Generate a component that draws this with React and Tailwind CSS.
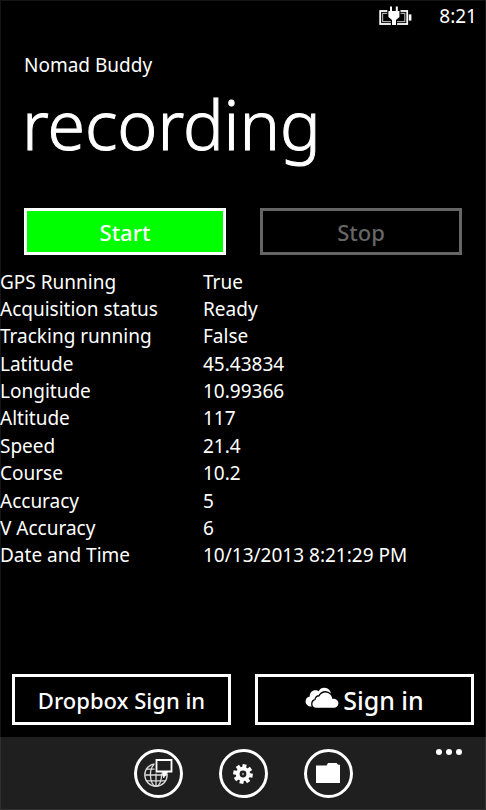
import React from "react";

const READINGS = [
  ["GPS Running", "True"],
  ["Acquisition status", "Ready"],
  ["Tracking running", "False"],
  ["Latitude", "45.43834"],
  ["Longitude", "10.99366"],
  ["Altitude", "117"],
  ["Speed", "21.4"],
  ["Course", "10.2"],
  ["Accuracy", "5"],
  ["V Accuracy", "6"],
  ["Date and Time", "10/13/2013 8:21:29 PM"],
];

export default function App() {
  return (
    <div className="relative flex min-h-screen flex-col bg-black font-['Noto_Sans','Open_Sans',sans-serif] text-white">
      <StatusBar />

      <header className="px-6 pt-[19px]">
        <p className="text-[19px] leading-7">Nomad Buddy</p>
        <h1 className="-ml-0.5 text-[68px] leading-[90px] font-light [-webkit-text-stroke:1px_white]">recording</h1>
      </header>

      <main className="flex flex-1 flex-col">
        <div className="grid grid-cols-2 gap-[34px] px-6 pt-[39px]">
          <button type="button" className="h-[47px] border-[3px] border-white bg-[#00ff00] text-[22px] leading-7 font-medium">
            Start
          </button>
          <button type="button" disabled className="h-[47px] border-[3px] border-[#666] text-[22px] leading-7 font-medium text-[#666]">
            Stop
          </button>
        </div>

        <table className="mt-[13px] h-[301px] w-full table-fixed text-left text-[19px] leading-[26px]">
          <tbody>
            {READINGS.map(([label, value]) => (
              <tr key={label}>
                <th scope="row" className="w-[203px] p-0 font-normal">{label}</th>
                <td className="p-0">{value}</td>
              </tr>
            ))}
          </tbody>
        </table>

        <div className="mt-auto grid grid-cols-2 gap-6 px-3 pb-3">
          <button type="button" className="h-[51px] border-[3px] border-white text-[22px] leading-7 font-medium">
            Dropbox Sign in
          </button>
          <button type="button" className="flex h-[51px] items-center justify-center gap-1 border-[3px] border-white text-[25px] leading-8 font-medium">
            <CloudIcon />
            Sign in
          </button>
        </div>
      </main>

      <AppBar />

      {/* faint screen edge */}
      <div className="pointer-events-none absolute inset-0 border border-white/8" aria-hidden="true" />
    </div>
  );
}

function StatusBar() {
  return (
    <div className="flex h-8 items-center justify-end gap-[26px] pr-[9px]">
      <BatteryIcon />
      <time className="text-[19px] leading-7">8:21</time>
    </div>
  );
}

function AppBar() {
  return (
    <footer className="grid h-[73px] grid-cols-[1fr_auto_1fr] items-start bg-[#1f1f1f]">
      <nav className="col-start-2 flex gap-9 pt-3" aria-label="App bar">
        <RoundButton label="Map">
          <GlobeIcon />
        </RoundButton>
        <RoundButton label="Settings">
          <GearIcon />
        </RoundButton>
        <RoundButton label="Files">
          <FolderIcon />
        </RoundButton>
      </nav>
      <button type="button" aria-label="More" className="mt-3 mr-6 justify-self-end">
        <svg width="26" height="6" viewBox="0 0 26 6" fill="currentColor" aria-hidden="true">
          <circle cx="3" cy="3" r="3" />
          <circle cx="13" cy="3" r="3" />
          <circle cx="23" cy="3" r="3" />
        </svg>
      </button>
    </footer>
  );
}

function RoundButton({ label, children }) {
  return (
    <button type="button" aria-label={label} className="flex size-[49px] items-center justify-center rounded-full border-[3px] border-white">
      {children}
    </button>
  );
}

function BatteryIcon() {
  return (
    <svg width="34" height="20" viewBox="0 0 34 20" aria-label="Charging" role="img">
      <rect x="1.2" y="5" width="27" height="13" fill="none" stroke="#fff" strokeWidth="1.8" />
      <rect x="3.6" y="7.4" width="22.2" height="8.2" fill="none" stroke="#aaa" strokeWidth="1.2" />
      <rect x="29.8" y="8.4" width="2.6" height="6.2" fill="#fff" />
      <path
        d="M11 0.5h2V5h3.8V0.5h2V5h1.6V11L17 14v5h-4v-5L9.4 11V5H11Z"
        fill="#fff"
        stroke="#000"
        strokeWidth="2.2"
        paintOrder="stroke"
      />
    </svg>
  );
}

function CloudIcon() {
  return (
    <svg width="34" height="22" viewBox="0 0 34 22" className="mb-1" fill="currentColor" aria-hidden="true">
      <path d="M7 19.4C3 19.6 .6 17.4 .6 14.4 .6 11.6 2.4 9.6 4.8 9.4 4.4 5.8 7.4 3 10.6 3.2 12 3.2 13 3.8 13.6 4.2 15 1.6 17.2.6 19.6.8 23 1 25.4 3.4 26 6.6Z" />
      <path
        d="M11.4 20.8C8.8 20.8 7.4 19 7.4 17 7.4 15 8.8 13.4 10.6 13 10.6 10.6 12.4 9.2 14.4 9.4 15.8 6.4 18 5.4 20.4 5.4 24.2 5.6 27 8.2 27.2 11.8 30.8 11.4 33.6 13.6 33.4 16.6 33.2 19 31.4 20.8 29 20.8Z"
        stroke="#000"
        strokeWidth="2.6"
        paintOrder="stroke"
      />
    </svg>
  );
}

function GlobeIcon() {
  return (
    <svg width="29" height="30" viewBox="0 0 29 30" fill="none" stroke="#fff" aria-hidden="true">
      <g strokeWidth="1.3" stroke="#ddd">
        <circle cx="12" cy="16" r="11.2" />
        <ellipse cx="12" cy="16" rx="5.6" ry="11.2" />
        <path d="M12 5v22M1 16h22M3 10.2h18M3 21.8h18" />
      </g>
      <path d="M12.5 1h15v11.5h-15Z" fill="#1f1f1f" stroke="#1f1f1f" strokeWidth="4" />
      <path d="M12.5 1h15v11.5h-15Z" fill="#1f1f1f" strokeWidth="1.8" />
      <path d="M18 12.5h6L19.6 19Z" fill="#fff" strokeWidth="0.6" />
    </svg>
  );
}

function GearIcon() {
  return (
    <svg width="20" height="20" viewBox="-10 -10 20 20" fill="#fff" aria-hidden="true">
      {[0, 45, 90, 135].map((angle) => (
        <rect key={angle} x="-2" y="-9.8" width="4" height="19.6" transform={`rotate(${angle + 10})`} />
      ))}
      <circle r="7.2" />
      <circle r="3.4" fill="#1f1f1f" />
      <circle r="1.2" fill="#888" />
    </svg>
  );
}

function FolderIcon() {
  return (
    <svg width="24" height="20" viewBox="0 0 24 20" className="-mt-0.5" fill="#fff" aria-hidden="true">
      <path d="M0 2.4h10.6L12 0h8.6l1.4 1.8H24V20H0Z" />
    </svg>
  );
}
